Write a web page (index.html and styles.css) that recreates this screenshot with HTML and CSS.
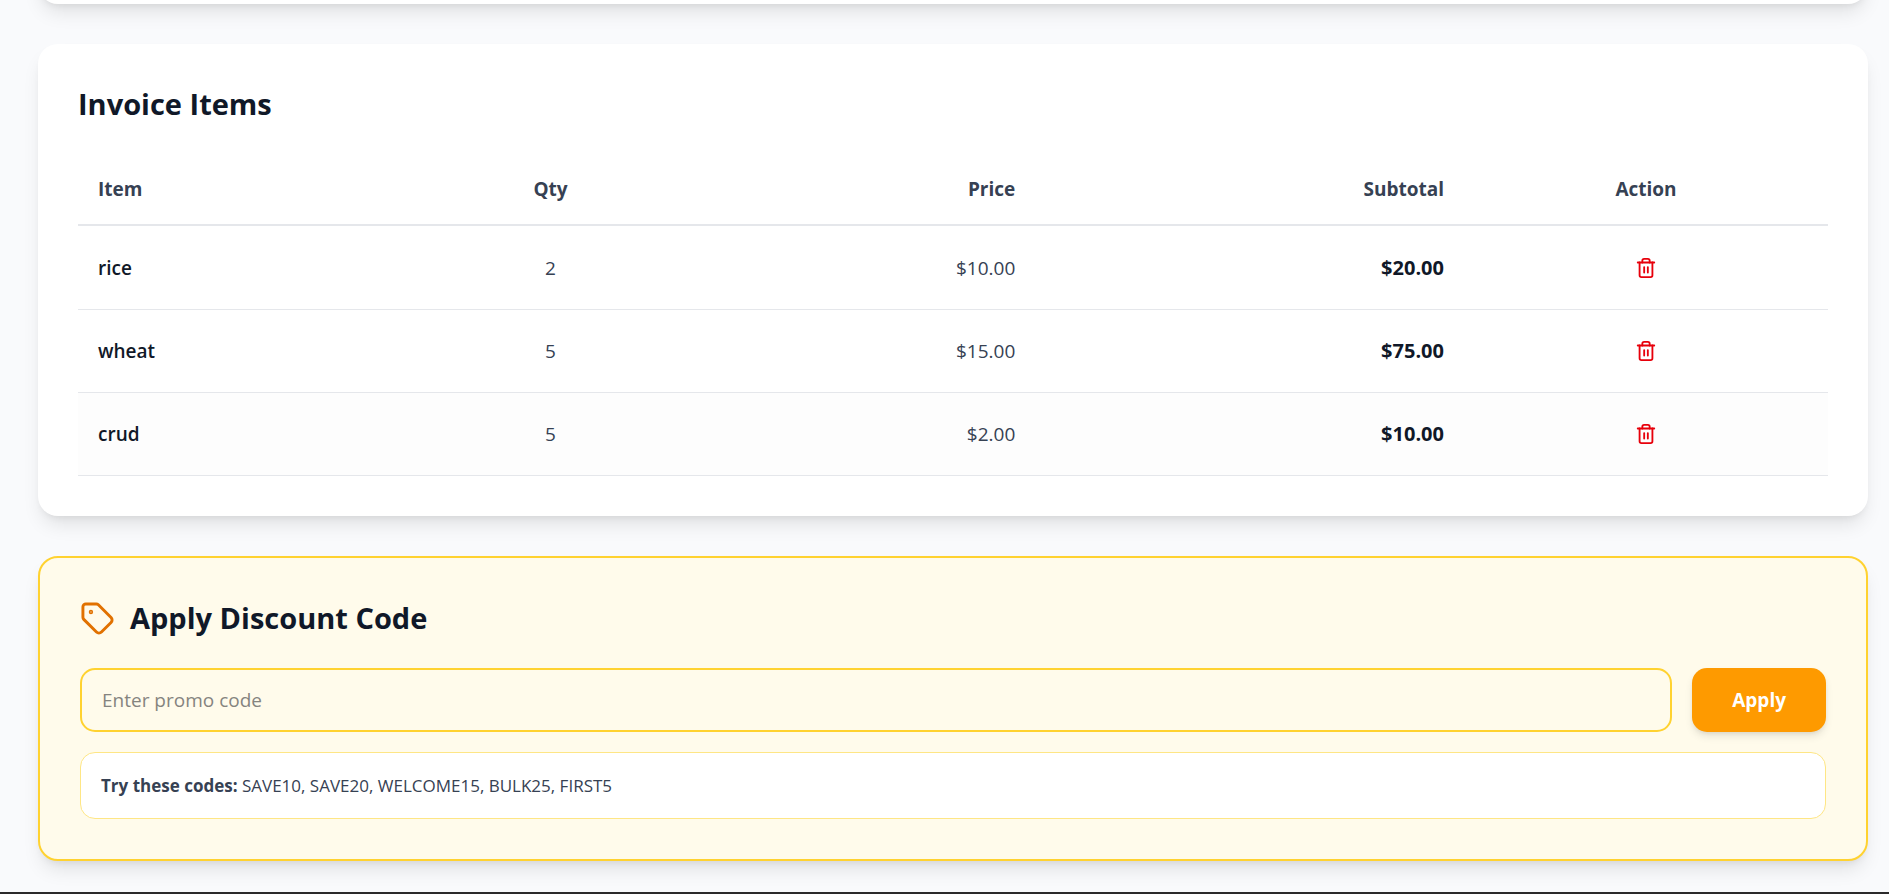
FILE: index.html
```html
<!DOCTYPE html>
<html lang="en">
<head>
    <meta charset="UTF-8">
    <meta name="viewport" content="width=device-width, initial-scale=1.0">
    <title>Invoice</title>
    <link rel="stylesheet" href="styles.css">
</head>
<body>
    <!-- Shared icons -->
    <svg class="sprite" aria-hidden="true">
        <symbol id="icon-trash" viewBox="0 0 24 24">
            <path d="M3 6h18"/>
            <path d="M19 6v14c0 1-1 2-2 2H7c-1 0-2-1-2-2V6"/>
            <path d="M8 6V4c0-1 1-2 2-2h4c1 0 2 1 2 2v2"/>
            <path d="M10 11v6"/>
            <path d="M14 11v6"/>
        </symbol>
    </svg>

    <main class="page">
        <div class="card card-tail"></div>

        <section class="card">
            <h2 class="card-title">Invoice Items</h2>
            <table class="items">
                <thead>
                    <tr>
                        <th class="col-item">Item</th>
                        <th class="col-qty">Qty</th>
                        <th class="col-price">Price</th>
                        <th class="col-subtotal">Subtotal</th>
                        <th class="col-action">Action</th>
                    </tr>
                </thead>
                <tbody>
                    <tr>
                        <td class="col-item">rice</td>
                        <td class="col-qty">2</td>
                        <td class="col-price">$10.00</td>
                        <td class="col-subtotal">$20.00</td>
                        <td class="col-action"><button type="button" class="delete-button" aria-label="Remove rice"><svg class="icon"><use href="#icon-trash"/></svg></button></td>
                    </tr>
                    <tr>
                        <td class="col-item">wheat</td>
                        <td class="col-qty">5</td>
                        <td class="col-price">$15.00</td>
                        <td class="col-subtotal">$75.00</td>
                        <td class="col-action"><button type="button" class="delete-button" aria-label="Remove wheat"><svg class="icon"><use href="#icon-trash"/></svg></button></td>
                    </tr>
                    <tr class="active">
                        <td class="col-item">crud</td>
                        <td class="col-qty">5</td>
                        <td class="col-price">$2.00</td>
                        <td class="col-subtotal">$10.00</td>
                        <td class="col-action"><button type="button" class="delete-button" aria-label="Remove crud"><svg class="icon"><use href="#icon-trash"/></svg></button></td>
                    </tr>
                </tbody>
            </table>
        </section>

        <section class="card discount">
            <h2 class="card-title">
                <svg class="icon tag-icon" viewBox="0 0 24 24" aria-hidden="true">
                    <path d="M12.586 2.586A2 2 0 0 0 11.172 2H4a2 2 0 0 0-2 2v7.172a2 2 0 0 0 .586 1.414l8.704 8.704a2.426 2.426 0 0 0 3.42 0l6.58-6.58a2.426 2.426 0 0 0 0-3.42z"/>
                    <circle cx="7.5" cy="7.5" r=".5" fill="currentColor"/>
                </svg>
                <label for="promo">Apply Discount Code</label>
            </h2>
            <form class="promo-form">
                <input type="text" id="promo" class="promo-input" placeholder="Enter promo code">
                <button type="button" class="apply-button">Apply</button>
            </form>
            <p class="codes"><strong>Try these codes:</strong> SAVE10, SAVE20, WELCOME15, BULK25, FIRST5</p>
        </section>
    </main>
    <footer class="footer"></footer>
</body>
</html>
```

FILE: styles.css
```css
* {
    box-sizing: border-box;
}
body {
    margin: 0;
    background: #f9fafc;
    color: #101828;
    font-family: "Segoe UI", "Open Sans", "Noto Sans", sans-serif;
    font-size: 19px;
    line-height: 30px;
}
.sprite {
    display: none;
}
.page {
    display: flex;
    flex-direction: column;
    gap: 40px;
    padding: 0 21px 31px 38px;
    overflow: hidden;
}
.card {
    padding: 40px;
    background: #fff;
    border-radius: 20px;
    box-shadow: 0 12px 19px -4px rgba(0, 0, 0, 0.1), 0 5px 8px -5px rgba(0, 0, 0, 0.1);
}
/* End of the card above, scrolled out of view */
.card-tail {
    height: 80px;
    margin-top: -76px;
}
.card-title {
    display: flex;
    align-items: center;
    gap: 15px;
    margin: 0 0 30px;
    font-size: 29px;
    font-weight: 700;
    line-height: 40px;
}
.icon {
    display: block;
    width: 22px;
    height: 22px;
    fill: none;
    stroke: currentColor;
    stroke-width: 2;
    stroke-linecap: round;
    stroke-linejoin: round;
}

/* Items table */
.items {
    width: 100%;
    table-layout: fixed;
    border-collapse: separate;
    border-spacing: 0;
}
.items th {
    padding: 20px;
    border-bottom: 2px solid #e5e7eb;
    color: #364153;
    font-weight: 700;
}
.items td {
    padding: 20px;
    border-bottom: 1px solid #e5e7eb;
    color: #364153;
}
.items tbody tr:first-child td {
    height: 84px;
}
.items .active td {
    background: #fdfdfd;
}
.items .col-item {
    width: 20%;
    text-align: left;
}
.items .col-qty {
    width: 14%;
    text-align: center;
}
.items .col-price {
    text-align: right;
}
.items .col-subtotal {
    width: 24.5%;
    text-align: right;
}
.items .col-action {
    width: 20.8%;
    text-align: center;
}
.items td.col-item {
    color: #101828;
    font-weight: 600;
}
.items td.col-subtotal {
    color: #101828;
    font-size: 20px;
    font-weight: 700;
}
.delete-button {
    display: block;
    margin: 0 auto;
    padding: 10px;
    border: 0;
    border-radius: 10px;
    background: none;
    color: #e7000b;
    cursor: pointer;
}
.delete-button:hover {
    background: #fef2f2;
}

/* Discount code */
.discount {
    background: #fffbeb;
    border: 2px solid #ffd230;
}
.tag-icon {
    width: 35px;
    height: 35px;
    color: #e17100;
}
.promo-form {
    display: flex;
    gap: 20px;
    margin-bottom: 20px;
}
.promo-input {
    flex: 1;
    min-width: 0;
    padding: 15px 20px;
    border: 2px solid #ffd230;
    border-radius: 15px;
    background: transparent;
    color: #101828;
    font: inherit;
}
.promo-input::placeholder {
    color: #85847f;
}
.apply-button {
    padding: 15px 40px;
    border: 0;
    border-radius: 15px;
    background: #fe9a00;
    color: #fff;
    font: inherit;
    font-weight: 700;
    box-shadow: 0 5px 8px -1px rgba(0, 0, 0, 0.1), 0 2px 5px -2px rgba(0, 0, 0, 0.1);
    cursor: pointer;
}
.apply-button:hover {
    background: #e17100;
}
.codes {
    margin: 0;
    padding: 20px;
    border: 1px solid #fee685;
    border-radius: 15px;
    background: #fff;
    color: #364153;
    font-size: 17px;
    line-height: 25px;
}
.footer {
    height: 2px;
    background: #2b2a2b;
}
```
